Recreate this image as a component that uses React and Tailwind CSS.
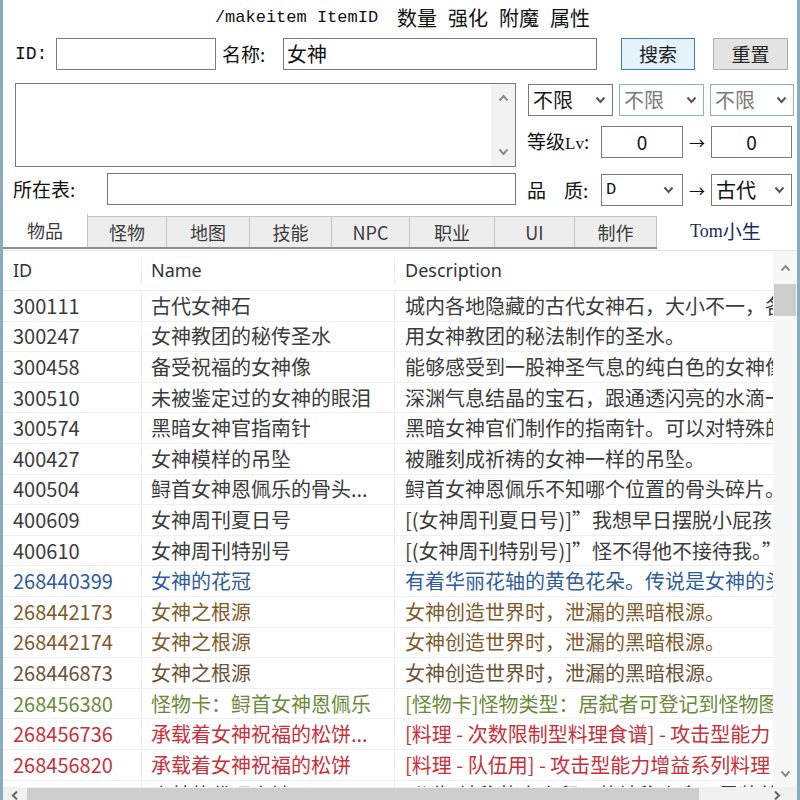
import React from "react";

const cjk = "font-['Noto_Sans_CJK_SC','Noto_Sans',sans-serif]";

const rows = [
  { id: "300111", name: "古代女神石", desc: "城内各地隐藏的古代女神石，大小不一，各", c: "text-[#3b3b3b]" },
  { id: "300247", name: "女神教团的秘传圣水", desc: "用女神教团的秘法制作的圣水。", c: "text-[#3b3b3b]" },
  { id: "300458", name: "备受祝福的女神像", desc: "能够感受到一股神圣气息的纯白色的女神像", c: "text-[#3b3b3b]" },
  { id: "300510", name: "未被鉴定过的女神的眼泪", desc: "深渊气息结晶的宝石，跟通透闪亮的水滴一", c: "text-[#3b3b3b]" },
  { id: "300574", name: "黑暗女神官指南针", desc: "黑暗女神官们制作的指南针。可以对特殊的", c: "text-[#3b3b3b]" },
  { id: "400427", name: "女神模样的吊坠", desc: "被雕刻成祈祷的女神一样的吊坠。", c: "text-[#3b3b3b]" },
  { id: "400504", name: "鲟首女神恩佩乐的骨头...", desc: "鲟首女神恩佩乐不知哪个位置的骨头碎片。", c: "text-[#3b3b3b]" },
  { id: "400609", name: "女神周刊夏日号", desc: "[(女神周刊夏日号)]”我想早日摆脱小屁孩的", c: "text-[#3b3b3b]" },
  { id: "400610", name: "女神周刊特别号", desc: "[(女神周刊特别号)]”怪不得他不接待我。”", c: "text-[#3b3b3b]" },
  { id: "268440399", name: "女神的花冠", desc: "有着华丽花轴的黄色花朵。传说是女神的头", c: "text-[#2e5c9c]" },
  { id: "268442173", name: "女神之根源", desc: "女神创造世界时，泄漏的黑暗根源。", c: "text-[#80592a]" },
  { id: "268442174", name: "女神之根源", desc: "女神创造世界时，泄漏的黑暗根源。", c: "text-[#80592a]" },
  { id: "268446873", name: "女神之根源", desc: "女神创造世界时，泄漏的黑暗根源。", c: "text-[#6b5234]" },
  { id: "268456380", name: "怪物卡：鲟首女神恩佩乐", desc: "[怪物卡]怪物类型：居弑者可登记到怪物图鉴", c: "text-[#6a8a38]" },
  { id: "268456736", name: "承载着女神祝福的松饼...", desc: "[料理 - 次数限制型料理食谱] - 攻击型能力", c: "text-[#c9303a]" },
  { id: "268456820", name: "承载着女神祝福的松饼", desc: "[料理 - 队伍用] - 攻击型能力增益系列料理", c: "text-[#c9303a]" },
  { id: "268462680", name: "小林的代理人镜子", desc: "[公告]神秘的商人留下的神秘小盒子里装着", c: "text-[#3b3b3b]" },
];

const tabs = [
  { t: "物品", w: "w-[85px]", on: true },
  { t: "怪物", w: "w-[79px]" },
  { t: "地图", w: "w-[83px]" },
  { t: "技能", w: "w-[82px]" },
  { t: "NPC", w: "w-[78px]" },
  { t: "职业", w: "w-[85px]" },
  { t: "UI", w: "w-[80px]" },
  { t: "制作", w: "w-[82px]" },
];

function Chevron({ up, className }) {
  return (
    <svg width="11" height="8" viewBox="0 0 11 8" className={className}>
      <path
        d={up ? "M1.5 6.5 L5.5 2 L9.5 6.5" : "M1.5 1.5 L5.5 6 L9.5 1.5"}
        fill="none"
        stroke="currentColor"
        strokeWidth="2"
      />
    </svg>
  );
}

function Select({ text, w, dim }) {
  return (
    <div
      className={`${w} flex h-[32px] items-center justify-between border bg-white pl-[4px] pr-[6px] text-[20px] ${
        dim ? "border-[#86b3c6] text-[#7a7a7a]" : "border-[#7a7a7a] text-[#1a1a1a]"
      }`}
    >
      <span>{text}</span>
      <Chevron className="text-[#555]" />
    </div>
  );
}

export default function App() {
  return (
    <div
      className={`relative h-[800px] w-[800px] overflow-hidden border-l-[3px] border-r-[3px] border-[#88abc0] bg-white text-[#111] ${cjk}`}
    >
      {/* command hint */}
      <div className="flex h-[34px] items-center justify-center pl-[5px] pt-[2px]">
        <span className="font-['Liberation_Mono',monospace] text-[17px] text-[#111]">/makeitem ItemID</span>
        <span className="ml-[19px] flex gap-[11px] text-[20px]">
          <span>数量</span>
          <span>强化</span>
          <span>附魔</span>
          <span>属性</span>
        </span>
      </div>

      {/* search row */}
      <div className="mt-[4px] flex h-[32px] items-center pl-[12px] text-[19px]">
        <span className="w-[41px] font-['Liberation_Mono',monospace] text-[18px]">ID:</span>
        <div className="h-full w-[160px] border border-[#7a7a7a] bg-white" />
        <span className="ml-[6px] w-[61px]">名称:</span>
        <div className="flex h-full w-[314px] items-center border border-[#7a7a7a] bg-white pl-[3px] text-[20px]">
          女神
        </div>
        <button className="ml-[24px] h-full w-[74px] border border-[#3c7fb1] bg-[#e5f1fb] text-[19px] text-[#222]">
          搜索
        </button>
        <button className="ml-[18px] h-full w-[75px] border border-[#adadad] bg-[#e3e3e3] text-[19px] text-[#222]">
          重置
        </button>
      </div>

      {/* filters */}
      <div className="mt-[13px] flex">
        <div className="flex w-[513px] flex-col pl-[12px]">
          <div className="flex h-[84px] w-[501px] border border-[#7a7a7a] bg-white">
            <div className="flex-1" />
            <div className="flex w-[24px] flex-col justify-between bg-[#f2f2f2] py-[10px] text-[#8a8a8a]">
              <Chevron up className="mx-auto" />
              <Chevron className="mx-auto" />
            </div>
          </div>
          <div className="mt-[6px] flex h-[32px] items-center text-[19px]">
            <span className="w-[92px] -ml-[2px]">所在表:</span>
            <div className="ml-[2px] h-full w-[409px] border border-[#7a7a7a] bg-white" />
          </div>
        </div>

        <div className="ml-[11px] flex flex-col pt-[1px]">
          <div className="flex gap-[6px] pl-[1px]">
            <Select text="不限" w="w-[85px]" />
            <Select text="不限" w="w-[85px]" dim />
            <Select text="不限" w="w-[84px]" dim />
          </div>
          <div className="mt-[10px] flex h-[32px] items-center text-[19px]">
            <span className="w-[74px]">
              等级<span className="font-['Liberation_Serif',serif] text-[17px]">Lv</span>:
            </span>
            <div className="flex h-full w-[82px] items-center justify-center border border-[#7a7a7a] bg-white text-[19px]">0</div>
            <span className="w-[28px] text-center text-[16px]">→</span>
            <div className="flex h-full w-[81px] items-center justify-center border border-[#7a7a7a] bg-white text-[19px]">0</div>
          </div>
          <div className="mt-[16px] flex h-[32px] items-center text-[19px]">
            <span className="flex w-[74px]">
              <span>品</span>
              <span className="ml-[18px]">质:</span>
            </span>
            <div className="flex h-full w-[82px] items-center justify-between border border-[#7a7a7a] bg-white pl-[4px] pr-[8px]">
              <span className="font-['Liberation_Mono',monospace] text-[17px]">D</span>
              <Chevron className="text-[#555]" />
            </div>
            <span className="w-[28px] text-center text-[16px]">→</span>
            <div className="flex h-full w-[81px] items-center justify-between border border-[#7a7a7a] bg-white pl-[4px] pr-[6px] text-[20px]">
              <span>古代</span>
              <Chevron className="text-[#555]" />
            </div>
          </div>
        </div>
      </div>

      {/* tabs */}
      <div className="mt-[8px] flex h-[33px] items-end">
        {tabs.map((tab) => (
          <div
            key={tab.t}
            className={`${tab.w} flex items-center justify-center border-r border-[#c4c4c4] text-[18px] text-[#3a3a3a] ${
              tab.on ? "h-[33px] bg-white" : "h-[31px] border-t bg-[#ededed]"
            }`}
          >
            {tab.t}
          </div>
        ))}
        <div className="ml-[33px] flex h-[31px] items-center text-[19px] text-[#1b2a5c]">
          <span className="font-['Liberation_Serif',serif] text-[18px]">Tom</span>小生
        </div>
      </div>
      <div className="h-[2px] w-[654px] bg-[#8e8e8e]" />

      {/* list */}
      <div className="mt-[1px] flex h-[537px] border-t border-[#e6e6e6]">
        <div className="flex flex-1 flex-col overflow-hidden">
          <div className="flex h-[40px] shrink-0 items-center border-b border-[#ececec] text-[18px] text-[#333] font-['Noto_Sans',sans-serif]">
            <div className="w-[139px] border-r border-[#ececec] pl-[10px]">ID</div>
            <div className="w-[253px] border-r border-[#ececec] pl-[9px]">Name</div>
            <div className="pl-[10px]">Description</div>
          </div>
          {rows.map((r) => (
            <div
              key={r.id}
              className={`${r.c} flex h-[30.6px] shrink-0 items-center whitespace-nowrap border-b border-[#f0f0f0] text-[20px]`}
            >
              <div className="flex h-full w-[139px] items-center border-r border-[#ececec] pl-[10px]">{r.id}</div>
              <div className="flex h-full w-[253px] items-center overflow-hidden border-r border-[#ececec] pl-[9px]">{r.name}</div>
              <div className="flex h-full flex-1 items-center overflow-hidden pl-[10px]">{r.desc}</div>
            </div>
          ))}
        </div>
        <div className="flex w-[24px] flex-col bg-[#f7f7f7]">
          <div className="flex h-[33px] items-center justify-center text-[#8a8a8a]">
            <Chevron up />
          </div>
          <div className="mx-[1px] h-[32px] bg-[#cdcdcd]" />
          <div className="flex-1" />
          <div className="flex h-[26px] items-center justify-center text-[#8a8a8a]">
            <Chevron />
          </div>
        </div>
      </div>
      <div className="flex h-[17px] items-center bg-[#f0f0f0]">
        <div className="flex w-[24px] items-center justify-center text-[#666]">
          <svg width="8" height="11" viewBox="0 0 8 11">
            <path d="M6 1.5 L2 5.5 L6 9.5" fill="none" stroke="currentColor" strokeWidth="2" />
          </svg>
        </div>
        <div className="h-[15px] w-[672px] bg-[#cdcdcd]" />
        <div className="flex-1" />
        <div className="flex w-[40px] items-center justify-center text-[#666]">
          <svg width="8" height="11" viewBox="0 0 8 11">
            <path d="M2 1.5 L6 5.5 L2 9.5" fill="none" stroke="currentColor" strokeWidth="2" />
          </svg>
        </div>
      </div>
    </div>
  );
}
